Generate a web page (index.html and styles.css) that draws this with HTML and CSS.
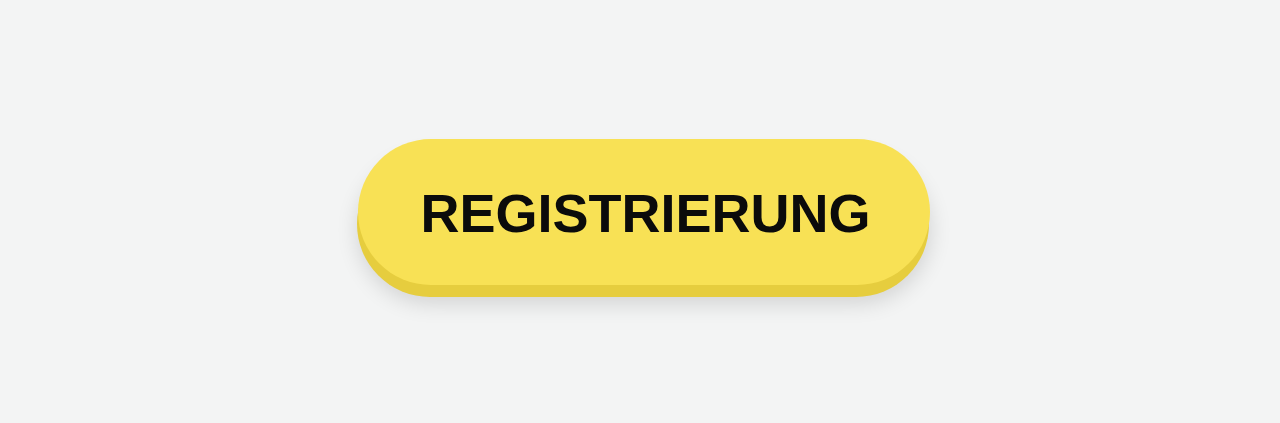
FILE: index.html
```html
<!DOCTYPE html>
<html lang="de">
<head>
<meta charset="utf-8">
<title>Registrierung</title>
<link rel="stylesheet" href="styles.css">
</head>
<body>
<main class="stage">
  <button class="btn" type="button">REGISTRIERUNG</button>
</main>
</body>
</html>
```
FILE: styles.css
```css
html, body {
  margin: 0;
  padding: 0;
  background: #f3f4f4;
  height: 423px;
  overflow: hidden;
}
.stage {
  display: flex;
  justify-content: center;
  padding-top: 139px;
  padding-left: 8px;
}
.btn {
  width: 572px;
  height: 146px;
  border: none;
  border-radius: 73px;
  background: #f8e155;
  color: #0b0b0b;
  font-family: "Liberation Sans", Arial, sans-serif;
  font-weight: 700;
  font-size: 54px;
  letter-spacing: 0;
  padding: 2px 0 0 3px;
  box-shadow: -1px 12px 0 #e6cd3e, 0 18px 22px rgba(0, 0, 0, 0.14);
  cursor: pointer;
}
```
